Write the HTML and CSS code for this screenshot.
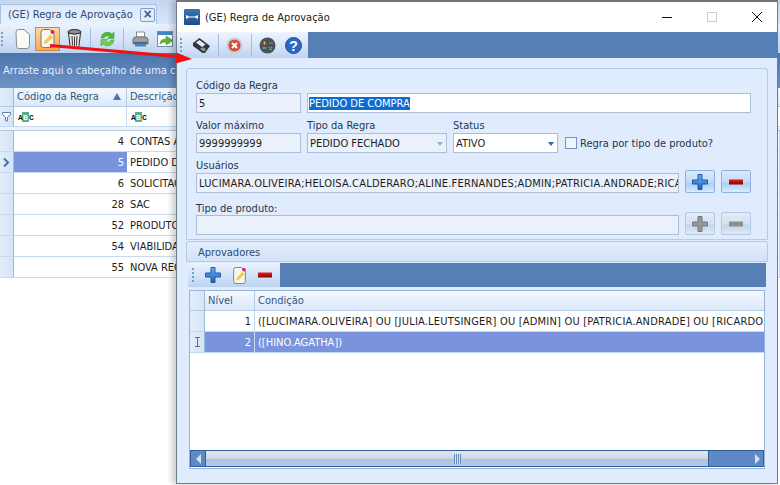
FILE: index.html
```html
<!DOCTYPE html>
<html lang="pt-BR">
<head>
    <meta charset="UTF-8">
    <title>(GE) Regra de Aprovação</title>
    <link rel="stylesheet" href="styles.css">
</head>
<body>
    <svg class="defs" width="0" height="0">
        <defs>
            <linearGradient id="plusBlue" x1="0" y1="0" x2="0" y2="1"><stop offset="0" stop-color="#6db0f0"/><stop offset="1" stop-color="#1f62c0"/></linearGradient>
            <linearGradient id="minusRed" x1="0" y1="0" x2="0" y2="1"><stop offset="0" stop-color="#e02020"/><stop offset="1" stop-color="#8a0000"/></linearGradient>
            <linearGradient id="panelFill" x1="0" y1="0" x2="0" y2="1"><stop offset="0" stop-color="#3f74b4"/><stop offset="1" stop-color="#1d4c8c"/></linearGradient>
            <symbol id="plus" viewBox="0 0 16 16"><path d="M6 0.500h4v5.500h5.500v4H10v5.500H6V10H0.500V6H6z" fill="url(#plusBlue)" stroke="#1c58a8"/></symbol>
            <symbol id="plusOff" viewBox="0 0 16 16"><path d="M6 0.500h4v5.500h5.500v4H10v5.500H6V10H0.500V6H6z" fill="#989898" stroke="#777"/></symbol>
            <symbol id="minus" viewBox="0 0 14 6"><rect width="14" height="5" y="0.500" fill="url(#minusRed)"/></symbol>
            <symbol id="minusOff" viewBox="0 0 14 6"><rect width="14" height="5" y="0.500" fill="#8e8e8e"/></symbol>
            <symbol id="editDoc" viewBox="0 0 15 19"><path d="M1 3q0-2.500 2.500-2.500h6l4.500 4v11.500q0 2.500-2.500 2.500h-8q-2.500 0-2.500-2.500z" fill="#f8f7ef" stroke="#77777a"/><path d="M4 15l1-3.500 5.500-6 2.500 2.500-6 6z" fill="#f5cf3a"/><path d="M4 15l1-3.500 2.500 2.500z" fill="#e8c080"/><circle cx="12.500" cy="3" r="2" fill="#d0207e"/></symbol>
            <symbol id="abc" viewBox="0 0 16 10"><rect x="4" y="0" width="7" height="10" fill="#58b088"/><text x="0" y="8" class="abc-text">A</text><text x="5" y="8" class="abc-text abc-mid">B</text><text x="11" y="8" class="abc-text">C</text></symbol>
        </defs>
    </svg>

    <div class="back">
        <div class="tabstrip">
            <div class="tab">(GE) Regra de Aprovação <span class="tab-close">×</span></div>
        </div>
        <div class="back-toolbar">
            <span class="grip"></span>
            <span class="tool">
                <svg width="15" height="20" viewBox="0 0 15 20"><path d="M1 3q0-2.500 2.500-2.500h5.500l5.500 5v11q0 3-2.500 3h-8q-2.500 0-2.500-2.500z" fill="#fbfbf6" stroke="#8a8a8a"/></svg>
            </span>
            <span class="tool tool-on"><svg width="15" height="19"><use href="#editDoc"/></svg></span>
            <span class="tool">
                <svg width="15" height="19" viewBox="0 0 15 19"><ellipse cx="7.500" cy="3" rx="6.500" ry="2.500" fill="#8d8d8d" stroke="#2a2a2a"/><path d="M1.500 4l1.500 12.500q0.300 2 4.500 2t4.500-2l1.500-12.500q-6 2.500-12 0z" fill="#e8e8e8" stroke="#2a2a2a"/><path d="M5 7l.5 9.500M7.500 7.500v9.500M10 7l-.5 9.500" stroke="#333" fill="none"/></svg>
            </span>
            <span class="sep"></span>
            <span class="tool">
                <svg width="17" height="18" viewBox="0 0 17 18"><path d="M2 8a6.500 6.500 0 0 1 11-4l2-2v6.500H8.500l2-2a4 4 0 0 0-5.500 1.500z" fill="#4cbb3a" stroke="#3a9a2e" stroke-width=".5"/><path d="M15 10a6.500 6.500 0 0 1-11 4l-2 2V9.500h6.500l-2 2a4 4 0 0 0 5.500-1.500z" fill="#6fd050" stroke="#3a9a2e" stroke-width=".5"/></svg>
            </span>
            <span class="sep"></span>
            <span class="tool">
                <svg width="17" height="16" viewBox="0 0 17 16"><path d="M4.500 1h8v5h-8z" fill="#fff" stroke="#888"/><path d="M1 9q0-3 3-3h9q3 0 3 3v4H1z" fill="#9a9fa6" stroke="#6f7378"/><rect x="1.500" y="11" width="14" height="1.500" fill="#555a62"/><rect x="3" y="13" width="11" height="2.500" fill="#3f86c8"/></svg>
            </span>
            <span class="tool">
                <svg width="18" height="16" viewBox="0 0 18 16"><rect x="0.500" y="0.500" width="15" height="15" fill="#fff" stroke="#7a8ea8"/><rect x="1" y="1" width="14" height="3" fill="#3f86d0"/><path d="M3 13q0-5 6-5V5l7 4.500-7 4.500v-3q-4 0-6 2z" fill="#5fb536" stroke="#3f8a20" stroke-width=".5"/></svg>
            </span>
        </div>
        <div class="group-bar">Arraste aqui o cabeçalho de uma coluna para agrupar</div>
        <div class="back-grid">
            <div class="cell head ind"></div>
            <div class="cell head">Código da Regra <span class="sort"></span></div>
            <div class="cell head">Descrição</div>

            <div class="cell ind filter">
                <svg width="9" height="10" viewBox="0 0 9 10"><path d="M.5.500h8v2l-3 2.500v4h-2v-4l-3-2.500z" fill="#fff" stroke="#5f7fa8"/></svg>
            </div>
            <div class="cell filter"><svg width="16" height="10"><use href="#abc"/></svg></div>
            <div class="cell filter"><svg width="16" height="10"><use href="#abc"/></svg></div>
            <div class="spacer"></div>

            <div class="cell ind"></div><div class="cell num">4</div><div class="cell">CONTAS A PAGAR</div>
            <div class="cell ind cur"><svg width="7" height="9" viewBox="0 0 7 9"><path d="M1 .500l4 4-4 4" fill="none" stroke="#4a6f9f" stroke-width="2"/></svg></div>
            <div class="cell num sel">5</div><div class="cell">PEDIDO DE COMPRA</div>
            <div class="cell ind"></div><div class="cell num">6</div><div class="cell">SOLICITAÇÃO</div>
            <div class="cell ind"></div><div class="cell num">28</div><div class="cell">SAC</div>
            <div class="cell ind"></div><div class="cell num">52</div><div class="cell">PRODUTO NOVO</div>
            <div class="cell ind"></div><div class="cell num">54</div><div class="cell">VIABILIDADE</div>
            <div class="cell ind"></div><div class="cell num">55</div><div class="cell">NOVA REGRA</div>
        </div>
    </div>

    <div class="win">
        <div class="titlebar">
            <svg class="win-icon" width="16" height="16" viewBox="0 0 16 16"><rect width="16" height="16" rx="1" fill="url(#panelFill)"/><path d="M2 6l3 1.500h6l3-1.500v4l-3-1.500H5L2 10z" fill="#fff"/></svg>
            <span class="win-title">(GE) Regra de Aprovação</span>
            <span class="win-btns">
                <svg width="12" height="12" viewBox="0 0 12 12"><path d="M1 6.500h10" stroke="#111"/></svg>
                <svg width="12" height="12" viewBox="0 0 12 12"><rect x="1.500" y="1.500" width="9" height="9" fill="none" stroke="#ccc"/></svg>
                <svg width="12" height="12" viewBox="0 0 12 12"><path d="M1 1l10 10M11 1L1 11" stroke="#111"/></svg>
            </span>
        </div>
        <div class="win-toolbar">
            <div class="win-tools">
                <span class="grip"></span>
                <span class="tool">
                    <svg width="17" height="15" viewBox="0 0 17 15"><path d="M0 5l6.500-5 10.500 8-5 7h-2.500L0 8z" fill="#33363c"/><path d="M3 4.500l3.500-2.500 6 4.500-3.500 2.500z" fill="#e6e9ee"/><path d="M7 11l3-2 3 2.500-2 2z" fill="#8f959e"/></svg>
                </span>
                <span class="sep"></span>
                <span class="tool">
                    <svg width="17" height="17" viewBox="0 0 17 17"><circle cx="8.500" cy="8.500" r="8" fill="#c9cdd3"/><circle cx="8.500" cy="8.500" r="6" fill="#dc4a3a"/><path d="M6 6l5 5M11 6l-5 5" stroke="#fff" stroke-width="2"/></svg>
                </span>
                <span class="sep"></span>
                <span class="tool">
                    <svg width="17" height="17" viewBox="0 0 17 17"><circle cx="8.500" cy="8.500" r="8" fill="#48525e"/><path d="M3.500 6h4M5.500 4v4" stroke="#e0a040"/><path d="M10 6h4" stroke="#e07050"/><path d="M3.500 11h4" stroke="#8fc0e0"/><path d="M10 10l3 3M13 10l-3 3" stroke="#70c080"/></svg>
                </span>
                <span class="tool t-help">
                    <svg width="17" height="17" viewBox="0 0 17 17"><circle cx="8.500" cy="8.500" r="8" fill="#2d68c4" stroke="#1e4f9e"/><text x="8.500" y="13.500" class="help">?</text></svg>
                </span>
            </div>
        </div>

        <div class="win-body">
            <div class="panel">
                <div class="row-code">
                    <label class="field">Código da Regra<span class="input ro">5</span></label>
                    <span class="input"><span class="marked">PEDIDO DE COMPRA</span></span>
                </div>
                <div class="row-main">
                    <label class="field">Valor máximo<span class="input ro">9999999999</span></label>
                    <label class="field">Tipo da Regra<span class="input ro combo">PEDIDO FECHADO<i class="caret off"></i></span></label>
                    <label class="field">Status<span class="input combo">ATIVO<i class="caret"></i></span></label>
                    <span class="check"><i class="box"></i>Regra por tipo de produto?</span>
                </div>
                <label class="field wide">Usuários</label>
                <div class="row-btns">
                    <span class="input ro clip">LUCIMARA.OLIVEIRA;HELOISA.CALDERARO;ALINE.FERNANDES;ADMIN;PATRICIA.ANDRADE;RICARDO.I</span>
                    <span class="btn"><svg width="16" height="16"><use href="#plus"/></svg></span>
                    <span class="btn"><svg width="14" height="6"><use href="#minus"/></svg></span>
                </div>
                <label class="field wide second">Tipo de produto:</label>
                <div class="row-btns">
                    <span class="input ro"></span>
                    <span class="btn btn-off"><svg width="16" height="16"><use href="#plusOff"/></svg></span>
                    <span class="btn btn-off"><svg width="14" height="6"><use href="#minusOff"/></svg></span>
                </div>
            </div>

            <div class="section">Aprovadores</div>
            <div class="sub-toolbar">
                <div class="sub-tools">
                    <span class="grip"></span>
                    <svg width="16" height="16"><use href="#plus"/></svg>
                    <svg width="15" height="17"><use href="#editDoc"/></svg>
                    <svg width="14" height="6"><use href="#minus"/></svg>
                </div>
            </div>
            <div class="grid">
                <div class="grid-rows">
                    <div class="cell head ind"></div>
                    <div class="cell head">Nível</div>
                    <div class="cell head">Condição</div>

                    <div class="cell ind"></div>
                    <div class="cell num">1</div>
                    <div class="cell clip">([LUCIMARA.OLIVEIRA] OU [JULIA.LEUTSINGER] OU [ADMIN] OU [PATRICIA.ANDRADE] OU [RICARDO.MARTINS] OU [HINO.AGATHA])</div>

                    <div class="cell ind cur"><svg width="7" height="10" viewBox="0 0 7 10"><path d="M1 .500h5M1 9.500h5M3.500 .500v9" fill="none" stroke="#6d6d6d"/></svg></div>
                    <div class="cell num sel">2</div>
                    <div class="cell sel">([HINO.AGATHA])</div>
                </div>
                <div class="hscroll">
                    <span class="sb-arrow"><i class="arrow-l"></i></span>
                    <span class="sb-thumb"><i class="sb-grip"></i></span>
                    <span class="sb-rest"><i class="arrow-r"></i></span>
                </div>
            </div>
        </div>
    </div>

    <svg class="red-arrow" width="200" height="70" viewBox="0 0 200 70"><path d="M50 45.500l127 11" stroke="#ee1111" stroke-width="3" fill="none"/><path d="M192 59l-15.500-6.500-1 11z" fill="#ee1111"/></svg>
</body>
</html>
```

FILE: styles.css
```css
* {
    box-sizing: border-box;
}

html, body {
    margin: 0;
    height: 485px;
    overflow: hidden;
}

body {
    position: relative;
    width: 780px;
    background: #fff;
    font-family: "DejaVu Sans Condensed", "DejaVu Sans", sans-serif;
    font-stretch: condensed;
    font-size: 11px;
    color: #1e2a3a;
}

.defs {
    position: absolute;
}

.abc-text {
    font-family: "Liberation Mono", monospace;
    font-size: 8px;
    font-weight: bold;
    fill: #111;
}

.abc-mid {
    fill: #fff;
}

.help {
    font-family: "Liberation Sans", sans-serif;
    font-size: 14px;
    font-weight: bold;
    fill: #fff;
    text-anchor: middle;
}

/* janela de tras */
.back {
    width: 780px;
}

.tabstrip {
    height: 24px;
    padding-top: 4px;
    background: linear-gradient(#c4d6ee, #d8e6f9);
}

.tab {
    display: flex;
    align-items: center;
    width: 157px;
    height: 20px;
    padding: 0 1px 0 7px;
    background: linear-gradient(#dfeafb, #e9f1fd);
    border: 1px solid #a9c3e6;
    border-bottom: 0;
    border-radius: 0 3px 0 0;
    color: #2c4a74;
    white-space: nowrap;
}

.tab-close {
    width: 15px;
    height: 14px;
    margin-left: auto;
    border: 1px solid #7e9fcb;
    border-radius: 2px;
    background: #e2ecfa;
    color: #3a5f92;
    font-family: "Liberation Sans", sans-serif;
    font-size: 14px;
    font-weight: bold;
    line-height: 11px;
    text-align: center;
}

.back-toolbar {
    display: flex;
    align-items: center;
    height: 29px;
    background: linear-gradient(#e9f2fe, #d4e3f8 55%, #bcd3f0);
}

.grip {
    flex: none;
    width: 2px;
    height: 14px;
    margin: 0 6px 0 1px;
    background: repeating-linear-gradient(#7f9cc4 0 2px, transparent 2px 4px);
}

.tool {
    flex: none;
    display: flex;
    align-items: center;
    justify-content: center;
    width: 26px;
    height: 24px;
}

.tool-on {
    width: 25px;
    margin-right: 1px;
    background: linear-gradient(#fcd9a0, #f9a850);
    border: 1px solid #d08a3a;
}

.sep {
    flex: none;
    width: 1px;
    height: 22px;
    margin: 0 3px;
    background: #a5bddc;
}

.group-bar {
    height: 35px;
    padding: 11px 0 0 3px;
    background: linear-gradient(#4a74ac, #6e95c7);
    color: #e8f0fb;
    white-space: nowrap;
}

.back-grid {
    display: grid;
    grid-template-columns: 14px 113px 1fr;
    grid-template-rows: 19px 20px 4px;
    grid-auto-rows: 21px;
}

.cell {
    display: flex;
    align-items: center;
    padding: 0 3px;
    background: #fff;
    border-right: 1px solid #c8d9ef;
    border-bottom: 1px solid #c8d9ef;
    color: #1c1c1c;
    white-space: nowrap;
    overflow: hidden;
}

.back-grid .cell:nth-child(3n) {
    border-right: 0;
}

.head {
    padding-bottom: 1px;
    background: linear-gradient(#f4f8fe, #dbe8f9);
    color: #34557f;
    border-color: #b4cbe8;
}

.back-grid .head {
    padding-bottom: 2px;
}

.back-grid .head ~ .filter {
    padding: 0 4px;
}

.ind {
    justify-content: center;
    padding: 0;
    background: linear-gradient(90deg, #e2edfb, #d5e4f7);
    border-right-color: #9dbadf;
}

.back-grid .filter.ind {
    padding: 0;
}

.spacer {
    grid-column: 1 / -1;
    background: #eef3fa;
    border-bottom: 1px solid #b4cbe8;
}

.sort {
    width: 0;
    height: 0;
    margin-left: auto;
    margin-right: 2px;
    border: 4px solid transparent;
    border-top: 0;
    border-bottom: 7px solid #4f74a6;
}

.num {
    justify-content: flex-end;
}

.sel {
    background: #7993dc;
    color: #fff;
}

.cell.sel + .cell.sel {
    color: #fff;
}

/* janela principal */
.win {
    position: absolute;
    top: 0;
    left: 176px;
    width: 602px;
    height: 484px;
    display: flex;
    flex-direction: column;
    background: #e0ecfd;
    border-top: 2px solid #70757c;
    border-left: 1px solid #6f7c8c;
    border-right: 1px solid #6f7c8c;
    border-bottom: 1px solid #6f7c8c;
    box-shadow: -4px 0 6px rgba(0, 0, 0, .2);
}

.titlebar {
    flex: none;
    display: flex;
    align-items: center;
    height: 30px;
    padding-left: 7px;
    background: #fff;
}

.win-title {
    margin-left: 5px;
    color: #222;
}

.win-btns {
    display: flex;
    gap: 33px;
    margin-left: auto;
    margin-right: 14px;
}

.win-toolbar {
    flex: none;
    height: 26px;
    background: #557fb5;
}

.win-tools {
    display: flex;
    align-items: center;
    width: 131px;
    height: 26px;
    background: linear-gradient(#eef4fe, #d6e4f8 55%, #bdd3f0);
}

.win-tools .grip {
    margin: 0 7px 0 3px;
}

.win-tools .tool {
    width: 24px;
}

.win-tools .sep {
    margin: 0 3px 0 5px;
}

.win-tools .t-help {
    margin-left: 2px;
}

.win-body {
    flex: 1;
    padding: 10px 9px 0 9px;
}

.panel {
    height: 172px;
    padding: 9px 16px 0 9px;
    background: #e0ecfd;
    border: 1px solid #b0cbee;
    border-radius: 3px 3px 0 0;
}

.field {
    display: flex;
    flex-direction: column;
    height: 35px;
    line-height: 16px;
    color: #24364e;
}

.field .input {
    margin-top: -1px;
}

.input {
    display: block;
    height: 20px;
    padding: 0 2px;
    background: #fff;
    border: 1px solid #abbdd8;
    line-height: 20px;
    color: #1c1c1c;
    white-space: nowrap;
}

.ro {
    background: #ebf1fa;
}

.clip {
    overflow: hidden;
    letter-spacing: .2px;
}

.marked {
    margin-left: -1px;
    background: #0c6cd0;
    color: #fff;
}

.row-code {
    display: grid;
    grid-template-columns: 105px 1fr;
    gap: 6px;
    align-items: end;
    margin-bottom: 5px;
}

.row-main {
    display: grid;
    grid-template-columns: 105px 140px 105px 1fr;
    gap: 6px;
    margin-bottom: 5px;
}

.combo {
    position: relative;
}

.caret {
    position: absolute;
    top: 8px;
    right: 3px;
    border: 3.500px solid transparent;
    border-top: 4px solid #2d69b8;
    border-bottom: 0;
}

.caret.off {
    border-top-color: #9fb0c6;
}

.check {
    display: flex;
    align-items: center;
    align-self: end;
    height: 20px;
    margin-left: 1px;
    padding-top: 1px;
    color: #24364e;
    white-space: nowrap;
}

.box {
    width: 12px;
    height: 12px;
    margin: -1px 3px 0 0;
    background: #eef4fc;
    border: 1px solid #6f95c8;
}

.wide {
    height: 12px;
}

.second {
    height: 11px;
    margin-top: 8px;
}

.row-btns {
    display: grid;
    grid-template-columns: 1fr 30px 30px;
    gap: 6px;
    align-items: end;
    height: 23px;
}

.btn {
    display: flex;
    align-items: center;
    justify-content: center;
    height: 23px;
    background: linear-gradient(#dbe9fb, #c4dcf6 50%, #a8d0f4 60%, #d8ecfc);
    border: 1px solid #8eb2de;
    border-radius: 2px;
}

.btn-off {
    background: linear-gradient(#e3ecf8, #d5e2f2 50%, #c6d6ea 60%, #e0eaf6);
    border-color: #b3c8e2;
}

.section {
    height: 21px;
    margin-top: 1px;
    padding: 4px 0 0 11px;
    background: linear-gradient(#e4eefd, #d2e2f8);
    border: 1px solid #b0cbee;
    border-radius: 3px 3px 0 0;
    color: #2c4a74;
}

.sub-toolbar {
    height: 24px;
    margin: 1px 2px 3px 2px;
    background: #557fb5;
}

.sub-tools {
    display: flex;
    align-items: center;
    gap: 11px;
    width: 92px;
    height: 24px;
    background: linear-gradient(#eaf2fe, #d2e2f8 55%, #bcd3f0);
}

.sub-tools .grip {
    margin: 0 0 0 4px;
}

.grid {
    display: flex;
    flex-direction: column;
    height: 179px;
    margin: 0 3px;
    padding-bottom: 1px;
    background: #fff;
    border: 1px solid #97b4da;
}

.grid-rows {
    flex: 1;
    display: grid;
    grid-template-columns: 15px 50px 1fr;
    grid-template-rows: 20px 21px 21px;
    align-content: start;
}

.grid-rows .cell:nth-child(3n) {
    border-right: 0;
}

.hscroll {
    display: flex;
    height: 17px;
    border: 1px solid #2f5e9e;
    background: #5e89c4;
}

.sb-arrow {
    display: flex;
    align-items: center;
    justify-content: center;
    width: 15px;
    background: #5e89c4;
    border-right: 1px solid #2f5e9e;
}

.arrow-l, .arrow-r {
    border: 5px solid transparent;
}

.arrow-l {
    border-left: 0;
    border-right: 5px solid #d4dfef;
}

.arrow-r {
    border-right: 0;
    border-left: 5px solid #d4dfef;
}

.sb-thumb {
    display: flex;
    align-items: center;
    justify-content: center;
    width: 503px;
    background: linear-gradient(#dfe6ef, #cdd8e6 50%, #b0c2da 55%, #b9c9de);
    border-right: 1px solid #2f5e9e;
}

.sb-grip {
    width: 7px;
    height: 10px;
    background: repeating-linear-gradient(90deg, #6c8cb8 0 1px, #d8e2ef 1px 2px);
}

.sb-rest {
    flex: 1;
    display: flex;
    align-items: center;
    justify-content: flex-end;
    padding-right: 3px;
}

.red-arrow {
    position: absolute;
    top: 0;
    left: 0;
}
```
